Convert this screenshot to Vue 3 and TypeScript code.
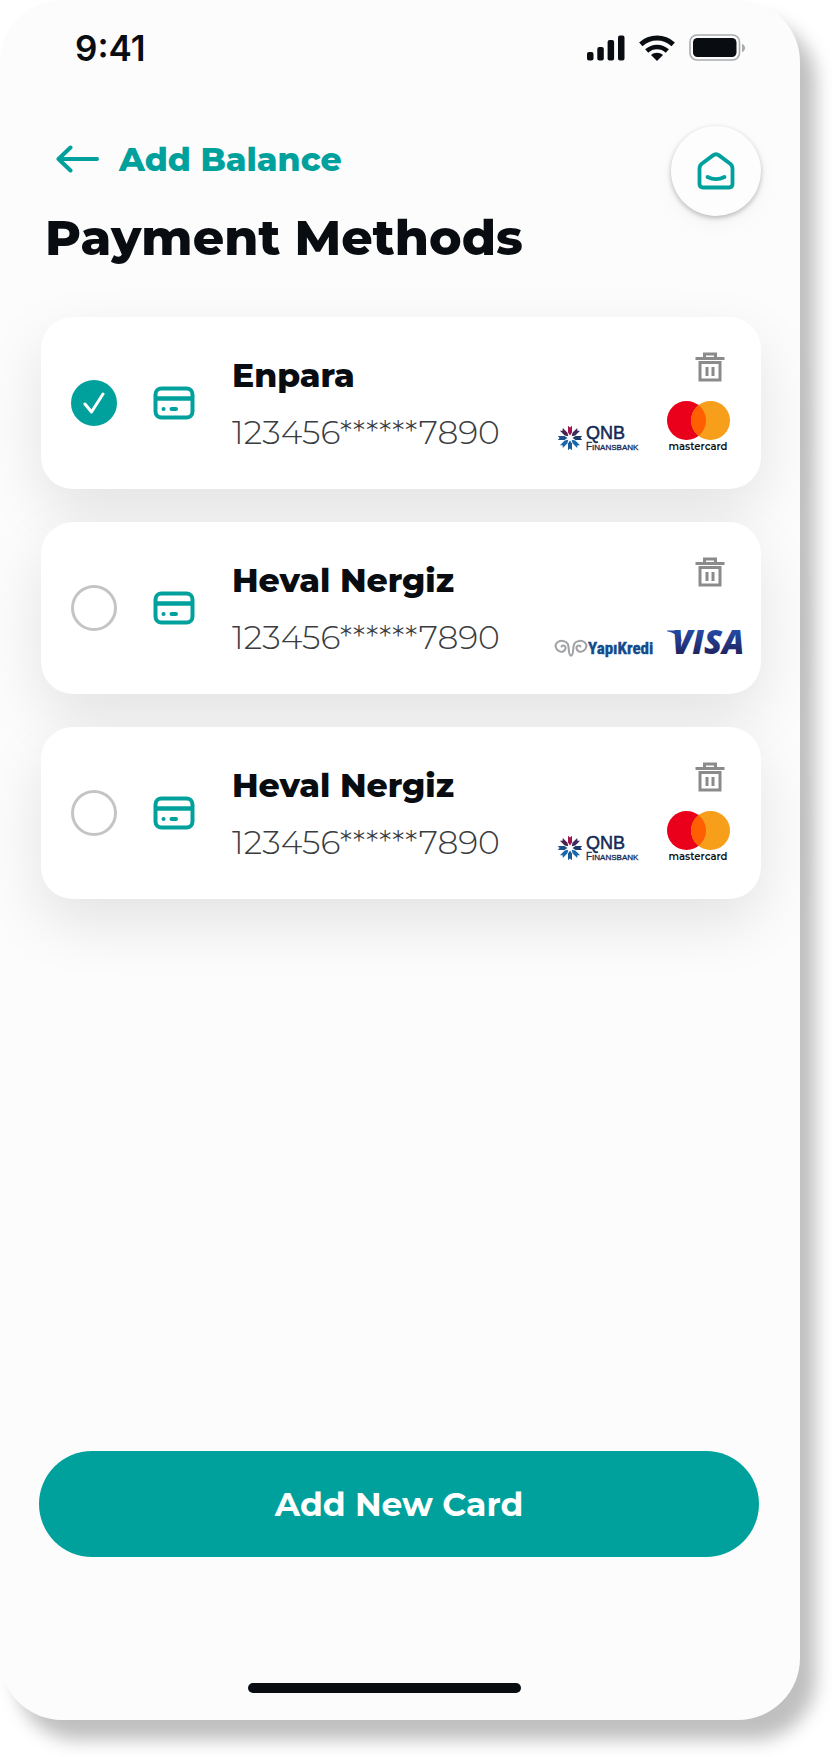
<script setup lang="ts">
import { ref } from 'vue'

interface PaymentCard {
  id: number
  name: string
  number: string
  bank: 'qnb' | 'yapikredi'
  network: 'mastercard' | 'visa'
}

const cards: PaymentCard[] = [
  { id: 1, name: 'Enpara', number: '123456******7890', bank: 'qnb', network: 'mastercard' },
  { id: 2, name: 'Heval Nergiz', number: '123456******7890', bank: 'yapikredi', network: 'visa' },
  { id: 3, name: 'Heval Nergiz', number: '123456******7890', bank: 'qnb', network: 'mastercard' },
]

const selected = ref<number>(1)

const petals: { angle: number; color: string }[] = [
  { angle: 0, color: '#a3134f' },
  { angle: 45, color: '#3b2a5c' },
  { angle: 90, color: '#1b3a6b' },
  { angle: 135, color: '#1767ad' },
  { angle: 180, color: '#1b5a99' },
  { angle: 225, color: '#1767ad' },
  { angle: 270, color: '#1b4f8c' },
  { angle: 315, color: '#4a2350' },
]
</script>

<template>
  <div class="screen">
    <div class="status">
      <span class="time">9:41</span>
      <div class="indicators">
        <svg width="38" height="26" viewBox="0 0 38 26" fill="#090d12" aria-hidden="true">
          <rect x="0" y="17" width="6.500" height="8.500" rx="2" />
          <rect x="10.300" y="12" width="6.500" height="13.500" rx="2" />
          <rect x="20.600" y="5" width="6.500" height="20.500" rx="2" />
          <rect x="31" y="0.500" width="6.500" height="25" rx="2" />
        </svg>
        <svg width="36" height="26" viewBox="0 0 36 26" fill="none" stroke="#090d12" aria-hidden="true">
          <path d="M1.800 9.300C11 1 25 1 34.200 9.300" stroke-width="5" />
          <path d="M7.700 16C13.500 10.600 22.500 10.600 28.300 16" stroke-width="4.600" />
          <path d="M12 20C15.500 17 20.500 17 24 20L18 26Z" fill="#090d12" stroke="none" />
        </svg>
        <svg width="57" height="28" viewBox="0 0 57 28" aria-hidden="true">
          <rect x="1" y="1" width="49.500" height="25" rx="7" fill="none" stroke="#a9abad" stroke-width="1.600" />
          <rect x="4" y="4" width="43.500" height="19" rx="4.500" fill="#090d12" />
          <path d="M53 10C57 11 57 17 53 18Z" fill="#a9abad" />
        </svg>
      </div>
    </div>

    <header class="header">
      <div class="titles">
        <a class="back" href="#balance">
          <svg width="44" height="28" viewBox="0 0 44 28" fill="none" stroke="#00a19d" stroke-width="4" stroke-linecap="round" stroke-linejoin="round" aria-hidden="true">
            <path d="M42 14H3.500M15.500 2.500L3.500 14L15.500 25.500" />
          </svg>
          <span>Add Balance</span>
        </a>
        <h1>Payment Methods</h1>
      </div>
      <button class="home" type="button" aria-label="Home">
        <svg width="38" height="38" viewBox="0 0 38 38" fill="none" stroke="#00a19d" stroke-width="3.800" stroke-linecap="round" stroke-linejoin="round" aria-hidden="true">
          <path d="M2.500 16.500Q2.500 13.500 4.800 11.700L16 3.400Q19 1.200 22 3.400L33.200 11.700Q35.500 13.500 35.500 16.500V32Q35.500 35.500 32 35.500H6Q2.500 35.500 2.500 32Z" />
          <path d="M10.500 25Q19 29.400 27.500 25" />
        </svg>
      </button>
    </header>

    <main class="cards">
      <article v-for="card in cards" :key="card.id" class="card">
        <label class="choice" :for="`card-${card.id}`">
          <span class="pick">
            <input :id="`card-${card.id}`" v-model="selected" type="radio" name="card" :value="card.id" />
            <svg v-if="selected === card.id" class="tick" width="22" height="22" viewBox="0 0 22 22" fill="none" stroke="#fff" stroke-width="3" stroke-linecap="round" stroke-linejoin="round" aria-hidden="true">
              <path d="M2 12L8.500 20L20 2" />
            </svg>
          </span>
          <svg class="card-icon" width="42" height="34" viewBox="0 0 42 34" fill="none" stroke="#00a19d" stroke-width="4" aria-hidden="true">
            <rect x="2.500" y="2.500" width="37" height="29" rx="6" />
            <path d="M2.500 12.500H39.500" stroke-width="4.500" />
            <path d="M10.500 23H10.600M18.500 23H23" stroke-linecap="round" />
          </svg>
          <span class="details">
            <strong>{{ card.name }}</strong>
            <span class="number">{{ card.number }}</span>
          </span>
        </label>

        <div class="side">
          <button class="trash" type="button" :aria-label="`Delete ${card.name}`">
            <svg width="30" height="30" viewBox="0 0 30 30" fill="none" stroke="#8b8b8b" stroke-width="3" aria-hidden="true">
              <path d="M0.500 6.500H29.500M9.500 6V2H20.500V6M5 10.500H25V28H5Z" />
              <path d="M12 15V24M18 15V24" />
            </svg>
          </button>
          <div class="logos">
            <svg v-if="card.bank === 'qnb'" width="99" height="28" viewBox="0 0 99 28" role="img" aria-label="QNB Finansbank">
              <g v-for="petal in petals" :key="petal.angle" :transform="`rotate(${petal.angle} 16 13)`">
                <path d="M14 0.800L16 2.600L18 0.800V7.500L16 10.500L14 7.500Z" :fill="petal.color" />
              </g>
              <text class="qnb" x="32" y="14">QNB</text>
              <text class="finans" x="32" y="25">F<tspan class="finans-small">INANSBANK</tspan></text>
            </svg>
            <svg v-else width="99" height="20" viewBox="0 0 99 20" role="img" aria-label="YapıKredi">
              <g fill="none" stroke="#9fa1a3" stroke-width="2" stroke-linecap="round">
                <path d="M7.500 8.500C8.500 6.500 12 7.500 11.500 10.500C11 13.500 7.500 14.500 5 13C1 11 0.500 6.500 3.500 4.200C6.500 2 12 2.500 13.800 6C15.500 9.500 14 17.500 17 17.500" />
                <path d="M26.500 8.500C25.500 6.500 22 7.500 22.500 10.500C23 13.500 26.500 14.500 29 13C33 11 33.500 6.500 30.500 4.200C27.500 2 22 2.500 20.200 6C18.500 9.500 20 17.500 17 17.500" />
              </g>
              <text class="yapi" x="34" y="16">YapıKredi</text>
            </svg>

            <svg v-if="card.network === 'mastercard'" width="76" height="52" viewBox="0 0 76 52" role="img" aria-label="mastercard">
              <circle cx="19.500" cy="19.500" r="19.500" fill="#eb001b" />
              <circle cx="43.500" cy="19.500" r="19.500" fill="#f79e1b" />
              <path d="M31.500 4.100A19.500 19.500 0 0 1 31.500 34.900A19.500 19.500 0 0 1 31.500 4.100Z" fill="#ff5f00" />
              <text class="master" x="31" y="49" text-anchor="middle">mastercard</text>
            </svg>
            <svg v-else width="76" height="28" viewBox="0 0 76 28" role="img" aria-label="VISA">
              <defs>
                <linearGradient id="visa-ink" x1="0" y1="0" x2="0" y2="1">
                  <stop offset="0.250" stop-color="#254aa5" />
                  <stop offset="0.800" stop-color="#20225f" />
                </linearGradient>
              </defs>
              <path d="M0 0.500H8Q12 0.500 13 4L15 12Q10 3 0 1.300Z" fill="#254aa5" />
              <text class="visa" x="5" y="24" fill="url(#visa-ink)">VISA</text>
            </svg>
          </div>
        </div>
      </article>
    </main>

    <footer class="footer">
      <button class="add" type="button">Add New Card</button>
      <div class="home-indicator"></div>
    </footer>
  </div>
</template>

<style>
body {
  margin: 0;
  background: #fff;
}
</style>

<style scoped>
.screen {
  box-sizing: border-box;
  display: flex;
  flex-direction: column;
  min-height: calc(100vh - 37px);
  margin: 0 32px 37px 0;
  border-radius: 62px;
  background: #fcfcfc;
  box-shadow: 16px 20px 18px rgba(0, 0, 0, 0.25);
  color: #090d12;
  font-family: Montserrat, Inter, "Open Sans", sans-serif;
}

.status {
  display: flex;
  justify-content: space-between;
  align-items: center;
  padding: 28px 54px 0 75px;
}

.time {
  font: 600 35px/40px Inter, sans-serif;
}

.indicators {
  display: flex;
  align-items: center;
  gap: 14px;
}

.header {
  display: flex;
  justify-content: space-between;
  align-items: flex-start;
  padding: 58px 39px 0 45px;
}

.titles {
  display: flex;
  flex-direction: column;
  gap: 29px;
  padding-top: 13px;
}

.back {
  display: flex;
  align-items: center;
  gap: 20px;
  padding-left: 10px;
  color: #00a19d;
  font-size: 33px;
  font-weight: 800;
  line-height: 40px;
  text-decoration: none;
}

h1 {
  margin: 0;
  font-size: 49px;
  font-weight: 800;
  line-height: 60px;
}

.home {
  display: grid;
  place-items: center;
  width: 90px;
  height: 90px;
  padding: 0;
  border: 0;
  border-radius: 50%;
  background: #fdfdfd;
  box-shadow: 0 2px 5px rgba(0, 0, 0, 0.25), 0 8px 20px rgba(0, 0, 0, 0.04);
}

.cards {
  display: flex;
  flex-direction: column;
  gap: 33px;
  padding: 49px 39px 0 41px;
}

.card {
  display: flex;
  justify-content: space-between;
  border-radius: 32px;
  background: #fff;
  box-shadow: 0 24px 60px rgba(0, 0, 0, 0.1);
}

.choice {
  display: flex;
  align-items: center;
  padding-left: 30px;
}

.pick {
  display: grid;
  place-items: center;
}

.pick input,
.tick {
  grid-area: 1 / 1;
}

.pick input {
  appearance: none;
  width: 46px;
  height: 46px;
  margin: 0;
  border: 3px solid #c4c4c6;
  border-radius: 50%;
}

.pick input:checked {
  border-color: #00a19d;
  background: #00a19d;
}

.tick {
  pointer-events: none;
}

.card-icon {
  margin: 0 37px 0 36px;
}

.details {
  display: flex;
  flex-direction: column;
  gap: 17px;
}

.details strong {
  font-size: 33px;
  font-weight: 800;
  line-height: 40px;
}

.number {
  color: #3a3c40;
  font-size: 33px;
  font-weight: 300;
  line-height: 40px;
}

.side {
  display: flex;
  flex-direction: column;
  align-items: flex-end;
  gap: 19px;
  padding: 35px 18px 36px 0;
}

.trash {
  display: block;
  height: 30px;
  margin-right: 18px;
  padding: 0;
  border: 0;
  background: none;
}

.logos {
  display: flex;
  align-items: flex-end;
  gap: 14px;
  height: 52px;
}

.logos svg {
  overflow: visible;
}

.qnb {
  fill: #152a56;
  font: 400 18px "Liberation Sans", sans-serif;
  stroke: #152a56;
  stroke-width: 0.5px;
}

.finans {
  fill: #152a56;
  font: 400 10px "Liberation Sans", sans-serif;
  stroke: #152a56;
  stroke-width: 0.3px;
}

.finans-small {
  font-size: 8px;
}

.yapi {
  fill: #144a8b;
  font: 700 17px "Liberation Sans Narrow", "Roboto Condensed", "Liberation Sans", sans-serif;
  stroke: #144a8b;
  stroke-width: 0.4px;
}

.master {
  fill: #111;
  font: 600 10px Montserrat, Inter, sans-serif;
}

.visa {
  font: italic 800 33px "Open Sans", sans-serif;
}

.footer {
  margin-top: auto;
  padding: 60px 41px 27px 39px;
}

.add {
  display: block;
  width: 100%;
  padding: 33px;
  border: 0;
  border-radius: 60px;
  background: #00a19d;
  color: #fff;
  font: 700 33px/40px Montserrat, Inter, sans-serif;
}

.home-indicator {
  width: 38%;
  height: 10px;
  margin: 126px 0 0 29%;
  border-radius: 5px;
  background: #090d12;
}
</style>
